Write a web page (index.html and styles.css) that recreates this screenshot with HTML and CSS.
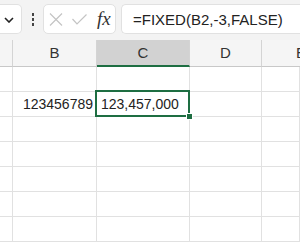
FILE: index.html
```html
<!DOCTYPE html>
<html lang="ja">
<head>
  <meta charset="UTF-8">
  <title>FIXED</title>
  <link rel="stylesheet" href="styles.css">
</head>
<body>
  <div class="barra">
    <div class="caja nombre">
      <svg width="10" height="6" viewBox="0 0 10 6"><path d="M1 1 L5 5 L9 1" fill="none" stroke="#222" stroke-width="1.6"/></svg>
    </div>
    <div class="puntos"><span></span><span></span><span></span></div>
    <div class="caja botones">
      <svg width="14" height="13" viewBox="0 0 14 13"><path d="M1 0.5 L13 12.5 M13 0.5 L1 12.5" stroke="#c4c4c4" stroke-width="1.2" fill="none"/></svg>
      <svg width="15" height="11" viewBox="0 0 15 11"><path d="M0.5 5 L5 10 L14.5 0.5" stroke="#c4c4c4" stroke-width="1.2" fill="none"/></svg>
      <span class="fx">fx</span>
    </div>
    <div class="caja formula">=FIXED(B2,-3,FALSE)</div>
  </div>

  <div class="hoja">
    <div class="enc"></div>
    <div class="enc">B</div>
    <div class="enc sel">C</div>
    <div class="enc">D</div>
    <div class="enc ultima">E</div>

    <div class="celda"></div><div class="celda"></div><div class="celda"></div><div class="celda"></div><div class="celda"></div>

    <div class="celda"></div>
    <div class="celda num">123456789</div>
    <div class="celda activa">123,457,000</div>
    <div class="celda"></div><div class="celda"></div>

    <div class="celda"></div><div class="celda"></div><div class="celda"></div><div class="celda"></div><div class="celda"></div>
    <div class="celda"></div><div class="celda"></div><div class="celda"></div><div class="celda"></div><div class="celda"></div>
    <div class="celda"></div><div class="celda"></div><div class="celda"></div><div class="celda"></div><div class="celda"></div>
    <div class="celda"></div><div class="celda"></div><div class="celda"></div><div class="celda"></div><div class="celda"></div>
    <div class="celda"></div><div class="celda"></div><div class="celda"></div><div class="celda"></div><div class="celda"></div>
  </div>
</body>
</html>
```

FILE: styles.css
```css
body {
  margin: 0;
  width: 300px;
  height: 250px;
  overflow: hidden;
  background: #fff;
  font-family: 'Liberation Sans', Arial, sans-serif;
  color: #222;
}

.barra {
  height: 40px;
  box-sizing: border-box;
  padding: 4px 0 6px;
  background: #f3f3f3;
  display: flex;
  align-items: stretch;
}

.caja {
  background: #fff;
  border: 1px solid #e1e1e1;
  border-radius: 5px;
  box-sizing: border-box;
  display: flex;
  align-items: center;
  flex-shrink: 0;
}

.nombre {
  width: 22px;
  border-left: none;
  border-radius: 0 5px 5px 0;
  justify-content: center;
  padding-right: 4px;
  padding-top: 2px;
}

.puntos {
  width: 21px;
  flex-shrink: 0;
  display: flex;
  flex-direction: column;
  align-items: center;
  justify-content: center;
  gap: 2px;
}

.puntos span {
  width: 2px;
  height: 3px;
  background: #444;
}

.botones {
  width: 73px;
  padding-left: 5px;
  gap: 8px;
}

.botones svg:first-child {
  margin-right: 1px;
}

.fx {
  font-family: 'Liberation Serif', serif;
  font-style: italic;
  font-size: 19px;
  color: #333;
  margin-left: 2px;
}

.formula {
  margin-left: 5px;
  flex: 1;
  min-width: 0;
  border-right: none;
  border-radius: 5px 0 0 5px;
  padding-left: 11px;
  font-size: 15px;
  color: #222;
  white-space: nowrap;
  overflow: hidden;
}

.hoja {
  display: grid;
  grid-template-columns: 13px 84px 93px 72px 38px;
  grid-template-rows: 27px;
  grid-auto-rows: 25px;
}

.enc {
  background: #f5f5f5;
  border-right: 1px solid #d4d4d4;
  border-bottom: 1px solid #c8c8c8;
  box-sizing: border-box;
  font-size: 15px;
  color: #333;
  text-align: center;
  line-height: 26px;
  overflow: hidden;
  white-space: nowrap;
}

.enc.ultima {
  border-right: none;
  text-align: left;
  padding-left: 34px;
}

.enc.sel {
  background: #d2d2d2;
  border-bottom: 2px solid #1e6e42;
  line-height: 25px;
}

.celda {
  border-right: 1px solid #e1e1e1;
  border-bottom: 1px solid #e1e1e1;
  box-sizing: border-box;
  font-size: 14px;
  line-height: 24px;
  color: #222;
  white-space: nowrap;
}

.celda.num {
  text-align: right;
  padding-right: 3px;
}

.celda.activa {
  position: relative;
  padding-left: 4px;
}

.celda.activa::before {
  content: "";
  position: absolute;
  left: -2px;
  top: -2px;
  right: -1px;
  bottom: -1px;
  border: 2px solid #1e6e42;
}

.celda.activa::after {
  content: "";
  position: absolute;
  right: -4px;
  bottom: -4px;
  width: 5px;
  height: 5px;
  background: #1e6e42;
  border: 1px solid #fff;
}
```
